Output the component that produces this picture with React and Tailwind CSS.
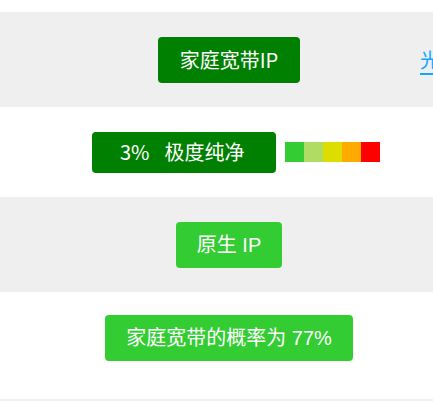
export default function App() {
  const segs = ["bg-[#33cc33]", "bg-[#b0dc64]", "bg-[#dddd00]", "bg-[#ffaa00]", "bg-[#ff0000]"];

  return (
    <div className="w-[433px] h-[401px] overflow-hidden bg-white font-['Noto_Sans_CJK_SC',sans-serif]">
      <div className="w-[620px] pt-[12px]">
        {/* 家庭宽带IP */}
        <div className="flex h-[95px] bg-[#efefef] items-center">
          <div className="w-[418px] pl-[40px] flex justify-center">
            <span className="h-[46px] px-[22px] flex items-center rounded-[4px] bg-[#008000] text-white text-[20px] leading-none">
              家庭宽带IP
            </span>
          </div>
          <a className="pl-[2px] text-[20px] leading-none text-[#13a8ff] underline underline-offset-[5px] whitespace-nowrap">
            光纤宽带
          </a>
        </div>

        {/* 纯净度 */}
        <div className="flex h-[90px] items-center">
          <div className="w-[418px] pl-[40px] flex justify-center">
            <div className="ml-[14px] flex items-center">
              <span className="h-[41px] w-[184px] pl-[28px] flex items-center rounded-[4px] bg-[#008000] text-white text-[20px] leading-none">
                <span>3%</span>
                <span className="ml-[15px]">极度纯净</span>
              </span>
              <div className="ml-[9px] flex">
                {segs.map((c) => (
                  <span key={c} className={`w-[19px] h-[20px] ${c}`} />
                ))}
              </div>
            </div>
          </div>
        </div>

        {/* 原生 IP */}
        <div className="flex h-[95px] bg-[#efefef] items-center">
          <div className="w-[418px] pl-[40px] flex justify-center">
            <span className="h-[46px] px-[21px] flex items-center rounded-[4px] bg-[#33cc33] text-white text-[20px] leading-none font-['Liberation_Sans','Noto_Sans_CJK_SC',sans-serif]">
              原生 IP
            </span>
          </div>
        </div>

        {/* 概率 */}
        <div className="flex h-[107px] items-start pt-[23px]">
          <div className="w-[418px] pl-[40px] flex justify-center">
            <span className="h-[46px] px-[21px] flex items-center rounded-[4px] bg-[#33cc33] text-white text-[20px] leading-none font-['Liberation_Sans','Noto_Sans_CJK_SC',sans-serif]">
              家庭宽带的概率为 77%
            </span>
          </div>
        </div>

        <div className="h-[20px] bg-[#efefef]" />
      </div>
    </div>
  );
}
